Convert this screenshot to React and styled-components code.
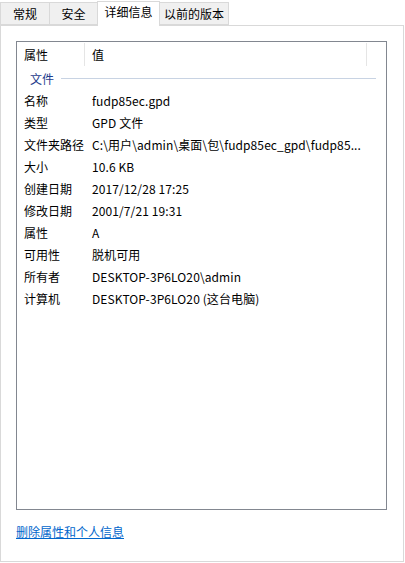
import React from "react";
import styled, { createGlobalStyle } from "styled-components";

const GlobalStyle = createGlobalStyle`
  body {
    margin: 0;
    background: #ffffff;
    font-family: "Noto Sans CJK SC", "Noto Sans", sans-serif;
    font-size: 12px;
    color: #000000;
  }
`;

const Window = styled.div`
  width: 405px;
  height: 563px;
  background: #ffffff;
`;

const TabBar = styled.div`
  display: flex;
  align-items: flex-end;
  height: 25px;
`;

const Tab = styled.div`
  box-sizing: border-box;
  width: ${(p) => p.width}px;
  height: ${(p) => (p.selected ? 25 : 23)}px;
  margin-left: ${(p) => (p.first ? 0 : -1)}px;
  margin-bottom: ${(p) => (p.selected ? -1 : 0)}px;
  padding-top: ${(p) => (p.selected ? 2 : 3)}px;
  position: relative;
  z-index: ${(p) => (p.selected ? 2 : 1)};
  border: 1px solid #d9d9d9;
  border-bottom: ${(p) => (p.selected ? "none" : "1px solid #d9d9d9")};
  background: ${(p) => (p.selected ? "#ffffff" : "#f0f0f0")};
  text-align: center;
  line-height: 16px;
  font-size: 12px;
  white-space: nowrap;
`;

const Panel = styled.div`
  box-sizing: border-box;
  width: 404px;
  height: 537px;
  border: 1px solid #d9d9d9;
  padding: 15px 0 0 15px;
`;

const ListBox = styled.div`
  box-sizing: border-box;
  width: 371px;
  height: 469px;
  border: 1px solid #828790;
  background: #ffffff;
`;

const HeaderRow = styled.div`
  display: flex;
  height: 25px;
  align-items: stretch;
`;

const HeaderCell = styled.div`
  box-sizing: border-box;
  width: ${(p) => p.width}px;
  padding-left: 7px;
  display: flex;
  align-items: center;
  border-right: ${(p) => (p.divider ? "1px solid #e5e5e5" : "none")};
  margin-top: 1px;
  margin-bottom: 1px;
`;

const GroupRow = styled.div`
  display: flex;
  align-items: center;
  height: 22px;
  padding: 0 10px 0 13px;
  gap: 7px;
`;

const GroupTitle = styled.span`
  color: #1e3c8c;
  padding-top: 1px;
`;

const GroupLine = styled.div`
  flex: 1;
  height: 1px;
  background: #c8d3e3;
`;

const Row = styled.div`
  display: grid;
  grid-template-columns: 68px 1fr;
  height: 22px;
  align-items: center;
`;

const Label = styled.div`
  padding-left: 7px;
  white-space: nowrap;
`;

const Value = styled.div`
  padding-left: 7px;
  white-space: nowrap;
  overflow: hidden;
  letter-spacing: 0.1px;
`;

const LinkText = styled.a`
  display: inline-block;
  margin-top: 13px;
  color: #0066cc;
  text-decoration: underline;
  font-size: 12px;
  cursor: pointer;
`;

const tabs = [
  { label: "常规", width: 50 },
  { label: "安全", width: 49 },
  { label: "详细信息", width: 63, selected: true },
  { label: "以前的版本", width: 70 },
];

const rows = [
  ["名称", "fudp85ec.gpd"],
  ["类型", "GPD 文件"],
  ["文件夹路径", "C:\\用户\\admin\\桌面\\包\\fudp85ec_gpd\\fudp85..."],
  ["大小", "10.6 KB"],
  ["创建日期", "2017/12/28 17:25"],
  ["修改日期", "2001/7/21 19:31"],
  ["属性", "A"],
  ["可用性", "脱机可用"],
  ["所有者", "DESKTOP-3P6LO20\\admin"],
  ["计算机", "DESKTOP-3P6LO20 (这台电脑)"],
];

export default function App() {
  return (
    <Window>
      <GlobalStyle />
      <TabBar>
        {tabs.map((t, i) => (
          <Tab key={t.label} width={t.width} selected={t.selected} first={i === 0}>
            {t.label}
          </Tab>
        ))}
      </TabBar>
      <Panel>
        <ListBox>
          <HeaderRow>
            <HeaderCell width={68} divider>属性</HeaderCell>
            <HeaderCell width={282} divider>值</HeaderCell>
          </HeaderRow>
          <GroupRow>
            <GroupTitle>文件</GroupTitle>
            <GroupLine />
          </GroupRow>
          {rows.map(([k, v]) => (
            <Row key={k}>
              <Label>{k}</Label>
              <Value>{v}</Value>
            </Row>
          ))}
        </ListBox>
        <LinkText>删除属性和个人信息</LinkText>
      </Panel>
    </Window>
  );
}
